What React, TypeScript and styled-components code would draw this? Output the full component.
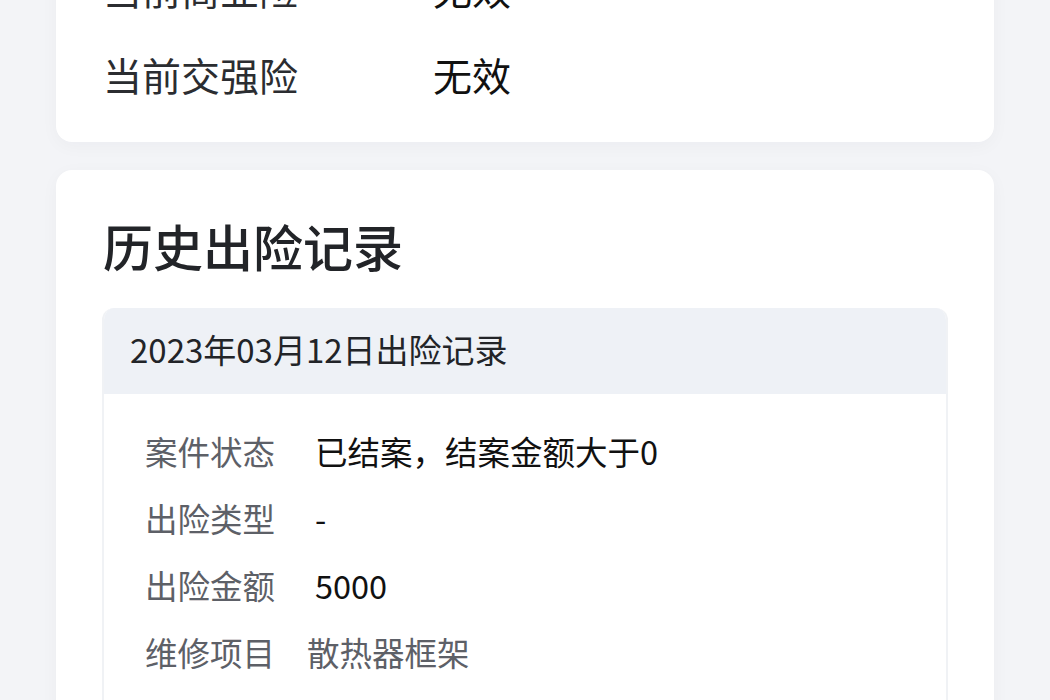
import styled, { createGlobalStyle } from 'styled-components';

const GlobalStyle = createGlobalStyle`
  html, body {
    margin: 0;
    padding: 0;
    background: #f3f4f7;
    font-family: "Noto Sans CJK SC", "Noto Sans", sans-serif;
    overflow: hidden;
  }
`;

const StyledPage = styled.div`
  display: flex;
  flex-direction: column;
  gap: 28px;
  padding: 0 56px 40px;
  margin-top: -72px;
`;

const StyledCard = styled.section`
  background: #ffffff;
  border-radius: 16px;
  box-shadow: 0 4px 18px rgba(30, 40, 60, 0.035);
`;

const StyledPolicyCard = styled(StyledCard)`
  display: flex;
  flex-direction: column;
  gap: 46px;
  padding: 40px 47px 48px;
`;

const StyledPolicyRow = styled.div`
  display: grid;
  grid-template-columns: 330px 1fr;
  font-size: 39px;
  line-height: 40px;
`;

const StyledPolicyLabel = styled.span`
  color: #2b2d31;
`;

const StyledPolicyValue = styled.span`
  color: #111111;
`;

const StyledHistoryCard = styled(StyledCard)`
  padding: 45px 46px 40px;
`;

const StyledHeading = styled.h2`
  margin: 0 0 33px 1px;
  font-size: 50px;
  line-height: 60px;
  font-weight: 500;
  color: #222428;
`;

const StyledRecord = styled.div`
  border: 2px solid #f0f2f5;
  border-top: none;
  border-radius: 12px 12px 0 0;
  overflow: hidden;
`;

const StyledRecordHeader = styled.div`
  display: flex;
  align-items: center;
  height: 86px;
  padding: 0 26px 5px;
  box-sizing: border-box;
  background: #eef1f6;
  font-size: 33px;
  color: #222428;
`;

const StyledRecordBody = styled.div`
  display: flex;
  flex-direction: column;
  gap: 27px;
  padding: 37px 41px 40px;
`;

const StyledRecordRow = styled.div`
  display: grid;
  grid-template-columns: 132px 1fr;
  column-gap: 38px;
  font-size: 32.5px;
  line-height: 40px;
`;

const StyledRecordLabel = styled.span`
  color: #5d6067;
`;

const StyledRecordValue = styled.span<{ $muted?: boolean; $offset?: number }>`
  color: ${({ $muted }) => ($muted ? '#5d6067' : '#111111')};
  margin-left: ${({ $offset }) => $offset ?? 0}px;
`;

const policies = [
  { label: '当前商业险', value: '无效' },
  { label: '当前交强险', value: '无效' },
];

const records = [
  { label: '案件状态', value: '已结案，结案金额大于0' },
  { label: '出险类型', value: '-' },
  { label: '出险金额', value: '5000' },
  { label: '维修项目', value: '散热器框架', muted: true, offset: -8 },
];

export default function App() {
  return (
    <>
      <GlobalStyle />
      <StyledPage>
        <StyledPolicyCard>
          {policies.map((p) => (
            <StyledPolicyRow key={p.label}>
              <StyledPolicyLabel>{p.label}</StyledPolicyLabel>
              <StyledPolicyValue>{p.value}</StyledPolicyValue>
            </StyledPolicyRow>
          ))}
        </StyledPolicyCard>

        <StyledHistoryCard>
          <StyledHeading>历史出险记录</StyledHeading>
          <StyledRecord>
            <StyledRecordHeader>2023年03月12日出险记录</StyledRecordHeader>
            <StyledRecordBody>
              {records.map((r) => (
                <StyledRecordRow key={r.label}>
                  <StyledRecordLabel>{r.label}</StyledRecordLabel>
                  <StyledRecordValue $muted={r.muted} $offset={r.offset}>
                    {r.value}
                  </StyledRecordValue>
                </StyledRecordRow>
              ))}
            </StyledRecordBody>
          </StyledRecord>
        </StyledHistoryCard>
      </StyledPage>
    </>
  );
}
